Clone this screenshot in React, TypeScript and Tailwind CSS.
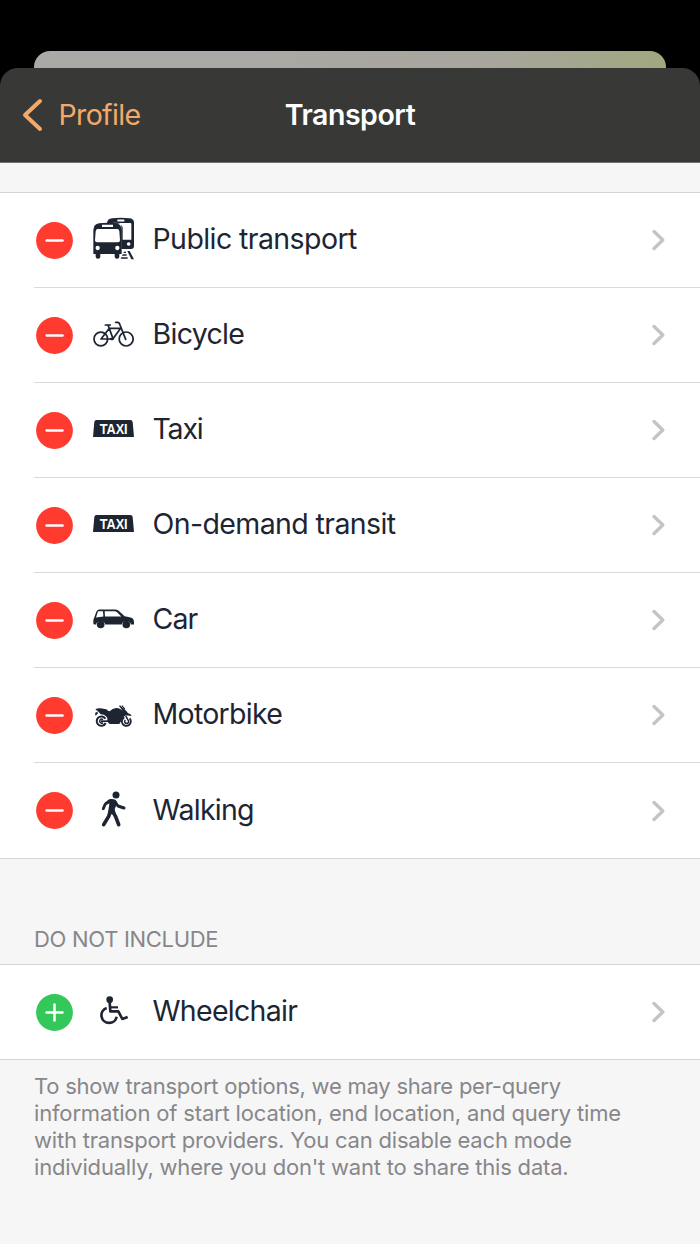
import type { ReactNode } from "react";

const INK = "#1d2533";

function Glyph({ viewBox, children }: { viewBox: string; children: ReactNode }) {
  return (
    <svg className="h-[50px] w-[42px] shrink-0" viewBox={viewBox} fill={INK}>
      {children}
    </svg>
  );
}

const BusIcon = () => (
  <Glyph viewBox="189 30 126 150">
    <path d="M231 56 Q231 41 247 40 Q272 37 298 40 Q311 41 312 52 V123 Q312 132 303 132 H274 V56 Z" />
    <path d="M262 43.500 H283 V49.500 H262 Z M246 54 H301 Q304 54 304 58 V104 H278 V68 Q276 54 258 53 Z" fill="#fff" />
    <circle cx="296" cy="117" r="5.500" fill="#fff" />
    <path d="M190 76 Q191 57 207 55 Q232 51 259 55 Q274 57 275 76 V147 H268 V155 Q268 161 261 161 Q254 161 254 155 V147 H211 V155 Q211 161 204 161 Q197 161 197 155 V147 H190 Z" />
    <path d="M216 59.500 H249 V66 H216 Z M203 72 H262 Q267 72 268 79 L270 106 Q270 112 264 112 H201 Q195 112 195 106 L197 79 Q198 72 203 72 Z" fill="#fff" />
    <circle cx="203" cy="129" r="6.500" fill="#fff" />
    <circle cx="262" cy="129" r="6.500" fill="#fff" />
    <path d="M278 136 H303 L315 164 H275 Z" fill="#fff" />
    <path d="M292 138 H299 L312 163 H304 Z M282 140 H288 V144 H280 Z M278 148 H290 V152 H276 Z M274 157 H293 V161 H272 Z" />
  </Glyph>
);

const BicycleIcon = () => (
  <Glyph viewBox="189 15 126 150">
    <g fill="none" stroke={INK} strokeWidth="5.200" strokeLinecap="round" strokeLinejoin="round">
      <circle cx="212.500" cy="102" r="20.500" />
      <circle cx="288.500" cy="102" r="21" />
      <path d="M226 60 H241 M234 60 L249 101 L272 70 H238 L213 102 H249" />
      <path d="M257 52 H263 Q268 52 270 60 L287 103" />
      <path d="M243 102 H248" strokeWidth="7" />
    </g>
  </Glyph>
);

const TaxiIcon = () => (
  <Glyph viewBox="189 15 126 150">
    <path d="M199 60 H301 Q307 60 308 66 L312 111 H189 L193 66 Q194 60 199 60 Z" />
    <text
      x="251"
      y="102"
      textAnchor="middle"
      textLength="84"
      lengthAdjust="spacingAndGlyphs"
      className="fill-white font-['Liberation_Sans'] text-[43px] font-bold"
    >
      TAXI
    </text>
  </Glyph>
);

const CarIcon = () => (
  <Glyph viewBox="24 1.500 126 150">
    <path d="M27 71 L34 52 Q37 45 43 45 H90 Q96 45 101 49 L119 65 Q136 67 143 72 Q147 75 147 84 V90 H138 A14.500 14.500 0 0 0 110 90 H61 A14.500 14.500 0 0 0 33 90 H29 Q25 90 25 86 V78 Q25 74 27 71 Z" />
    <path d="M40 50 H54 L55 66 L33 69 L38 53 Q38.500 50 40 50 Z M59 50 H89 Q93 50 96 53 L109 66 H60 Z" fill="#fff" />
    <circle cx="47" cy="90" r="11.500" />
    <circle cx="124" cy="90" r="11.500" />
  </Glyph>
);

const MotorbikeIcon = () => (
  <Glyph viewBox="24 2 126 150">
    <path d="M31 60 Q38 56 46 57 L64 60 Q69 67 75 65 Q82 57 93 56 Q101 56 107 60 L113 64 L106 55 L102 50 L105 48 L116 58 Q124 63 129 72 Q137 73 140 80 L122 78 Q113 82 109 94 L103 104 H74 L67 97 L67 86 Q61 76 47 75 L41 68 Z" />
    <path d="M111 47 L121 58 L119 62 L110 51 Z M30 71 L37 67 L39 71 L32 80 Z" />
    <g fill="none" stroke={INK}>
      <path d="M61 88 A14 14 0 1 0 62 101" strokeWidth="6" />
      <path d="M54 91 A6 6 0 1 0 54 100" strokeWidth="4.500" />
      <path d="M118 84 A13.500 13.500 0 1 0 134 87" strokeWidth="5.500" />
      <path d="M121 92 A6 6 0 1 0 129 92 L122 79" strokeWidth="4.500" />
    </g>
    <path d="M48 93 H78 V98 H48 Z" />
  </Glyph>
);

const WalkingIcon = () => (
  <Glyph viewBox="24 3 126 150">
    <circle cx="93" cy="30" r="10.500" />
    <g fill="none" stroke={INK} strokeLinecap="round" strokeLinejoin="round">
      <path d="M78 47 L63 55 Q59 58 55 71" strokeWidth="9" />
      <path d="M89 49 L99 63 L117 69" strokeWidth="9" />
      <path d="M76 78 L71 94 L56 119" strokeWidth="11" />
      <path d="M83 79 L92 95 L101 119" strokeWidth="11" />
    </g>
    <path d="M67 46 Q80 39 91 45 Q98 50 95 58 L89 73 L92 86 L80 88 L69 84 L73 57 Z" />
  </Glyph>
);

const WheelchairIcon = () => (
  <Glyph viewBox="189 6 126 150">
    <circle cx="239" cy="44" r="10" />
    <g fill="none" stroke={INK} strokeLinejoin="round">
      <path d="M239 52 L241 79 H265 L277 102 L293 96" strokeWidth="8" />
      <path d="M241 67 H264" strokeWidth="6.500" />
      <path d="M230 69 A23 23 0 1 0 260 95" strokeWidth="8" />
    </g>
  </Glyph>
);

function Toggle({ kind }: { kind: "remove" | "add" }) {
  return (
    <svg className="size-[37px] shrink-0" viewBox="0 0 37 37">
      <circle cx="18.500" cy="18.500" r="18.400" fill={kind === "add" ? "#34c759" : "#ff3b30"} />
      <path
        d={kind === "add" ? "M10.500 18.500H26.500M18.500 10.500V26.500" : "M10.500 18.500H26.500"}
        stroke="#fff"
        strokeWidth="2.500"
        strokeLinecap="round"
      />
    </svg>
  );
}

function Row({
  kind,
  icon,
  label,
  tracking,
  height = "h-[95.070px]",
  last = false,
}: {
  kind: "remove" | "add";
  icon: ReactNode;
  label: string;
  tracking: string;
  height?: string;
  last?: boolean;
}) {
  return (
    <li className={`flex items-stretch bg-white pl-[34px] ${height}`}>
      <div className={`flex flex-1 items-center pr-[34px] pl-[2px] ${last ? "" : "border-b border-[#dadada]"}`}>
        <Toggle kind={kind} />
        <span className="ml-5 flex">{icon}</span>
        <span className={`ml-[17.500px] flex-1 pb-0.5 text-[28.500px] leading-9 whitespace-nowrap ${tracking}`}>{label}</span>
        <svg
          className="h-[22px] w-[15px]"
          viewBox="0 0 15 22"
          fill="none"
          stroke="#c4c4c6"
          strokeWidth="3.400"
          strokeLinecap="round"
          strokeLinejoin="round"
        >
          <path d="M3 2.500 L11.800 11 L3 19.500" />
        </svg>
      </div>
    </li>
  );
}

export default function App() {
  return (
    <div className="flex h-[1244px] w-[700px] flex-col overflow-hidden bg-black font-['Inter',sans-serif] text-[#1d2533]">
      <div className="mx-[34px] mt-[51px] h-[17px] shrink-0 rounded-t-[16px] bg-linear-to-r from-[#a9a9a5] from-30% via-[#a9a59f] via-70% to-[#9fa87f]" />
      <div className="flex flex-1 flex-col">
        <header className="grid h-[95px] shrink-0 grid-cols-3 items-center rounded-t-[18px] border-b border-[#73716f] bg-[#383936]">
          <div className="flex items-center pl-[22px] text-[28.500px] tracking-[-0.650px] text-[#f2a969]">
            <svg
              className="h-[34px] w-[22px]"
              viewBox="0 0 22 34"
              fill="none"
              stroke="currentColor"
              strokeWidth="4"
              strokeLinecap="round"
              strokeLinejoin="round"
            >
              <path d="M18 3 L3 17 L18 31" />
            </svg>
            <span className="ml-[14.500px] pt-px">Profile</span>
          </div>
          <h1 className="pt-px text-center text-[28.500px] font-semibold tracking-[-0.450px] text-white">Transport</h1>
        </header>
        <main className="flex-1 bg-[#f6f6f6] pt-[29px]">
          <ul className="border-y border-[#d5d5d7]">
            <Row kind="remove" icon={<BusIcon />} label="Public transport" tracking="tracking-[-0.580px]" />
            <Row kind="remove" icon={<BicycleIcon />} label="Bicycle" tracking="tracking-[-0.700px]" />
            <Row kind="remove" icon={<TaxiIcon />} label="Taxi" tracking="tracking-[-1.200px]" />
            <Row kind="remove" icon={<TaxiIcon />} label="On-demand transit" tracking="tracking-[-0.600px]" />
            <Row kind="remove" icon={<CarIcon />} label="Car" tracking="tracking-[-0.900px]" />
            <Row kind="remove" icon={<MotorbikeIcon />} label="Motorbike" tracking="tracking-[-0.720px]" />
            <Row kind="remove" icon={<WalkingIcon />} label="Walking" tracking="tracking-[-0.720px]" last />
          </ul>
          <h2 className="mt-[66px] mb-[10px] pl-[34px] text-[22px] leading-[29px] tracking-[-0.300px] text-[#87878b]">
            DO NOT INCLUDE
          </h2>
          <ul className="border-y border-[#d5d5d7]">
            <Row
              kind="add"
              icon={<WheelchairIcon />}
              label="Wheelchair"
              tracking="tracking-[-0.720px]"
              height="h-[94px]"
              last
            />
          </ul>
          <div className="mt-[12.500px] pl-[34px] text-[22px] leading-[27px] whitespace-nowrap text-[#87878b]">
            <p className="tracking-[-0.240px]">To show transport options, we may share per-query</p>
            <p className="tracking-[-0.160px]">information of start location, end location, and query time</p>
            <p className="tracking-[-0.200px]">with transport providers. You can disable each mode</p>
            <p className="tracking-[-0.200px]">individually, where you don't want to share this data.</p>
          </div>
        </main>
      </div>
    </div>
  );
}
